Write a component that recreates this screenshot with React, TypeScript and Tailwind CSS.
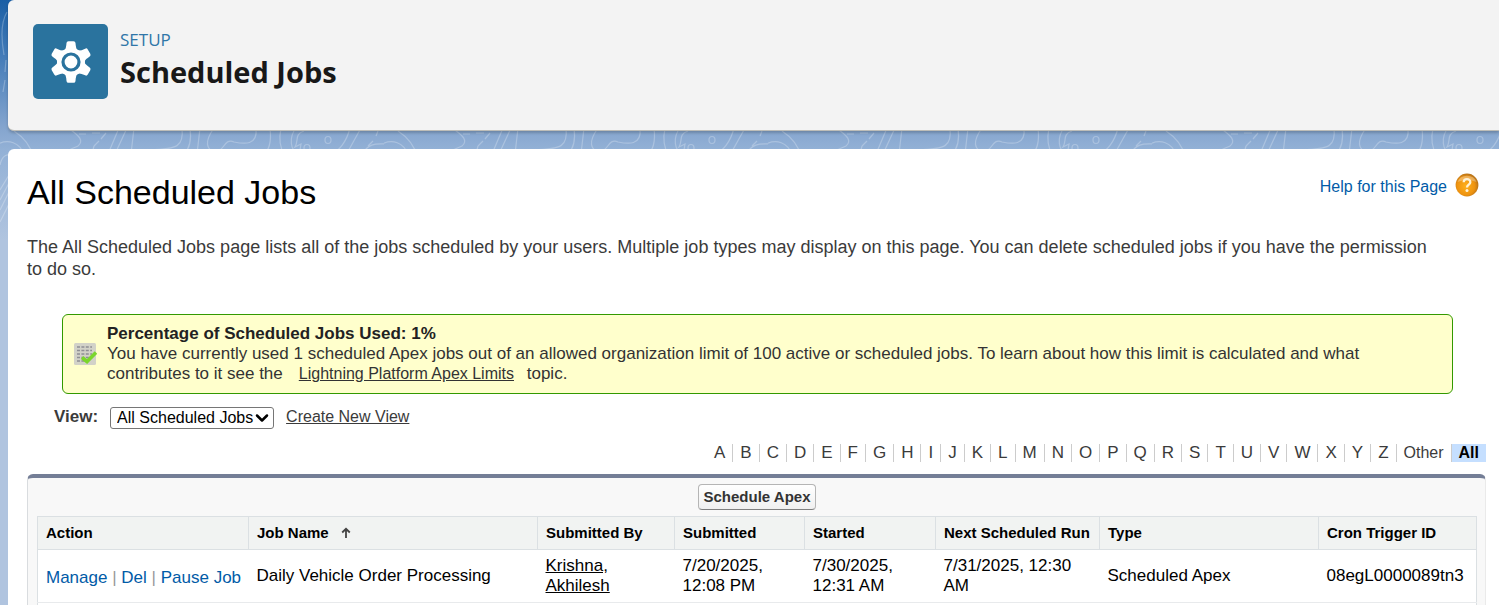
import type { ReactNode } from "react";
import { ChevronDown } from "lucide-react";

const letters = "ABCDEFGHIJKLMNOPQRSTUVWXYZ".split("");

function GearIcon() {
  return (
    <svg viewBox="-25 -25 50 50" className="size-[50px]" aria-hidden="true">
      <g fill="#fff" stroke="#fff" strokeWidth="4" strokeLinejoin="round">
        {[0, 60, 120, 180, 240, 300].map((a) => (
          <path key={a} transform={`rotate(${a})`} d="M-4.600 -11 Q-2.900 -13 -2.500 -18.800 H2.500 Q2.900 -13 4.600 -11 L4 -8 H-4 Z" />
        ))}
      </g>
      <circle r="14" fill="#fff" />
      <circle r="8" fill="#fff" stroke="#2a739e" strokeWidth="3.200" />
    </svg>
  );
}

function ContourPattern() {
  return (
    <svg className="absolute inset-0 h-full w-full" aria-hidden="true">
      <defs>
        <pattern id="contours" width="384" height="240" patternUnits="userSpaceOnUse">
          <g fill="none" stroke="#fff" strokeOpacity="0.25" strokeWidth="1.200">
            <path d="M14 131 C25 138 31 147 34 158 M-2 144 C8 139 20 142 24 155 M0 165 C2 155 9 152 12 158" />
            <path d="M68 128 C80 136 84 141 78 146 C72 149 66 150 62 155 M79 134 h7 M92 133 h8 M106 133 l-5 6 M99 141 l-5 5 M94 146 l-1 4" />
            <path d="M119 128 L108 154 M127 128 L115 154 M134 128 L131 154" />
            <path d="M182 128 C184 146 178 149 150 150 M190 128 C192 142 188 150 184 154 M200 128 L197 154" />
            <path d="M214 128 C204 142 206 149 216 154 M256 128 C258 146 244 144 234 142 C226 138 224 148 220 150 M270 128 C272 144 268 152 262 156" />
            <path d="M281 128 C278 142 281 150 285 156 M296 128 C288 138 291 150 298 156 M304 131 C294 134 299 141 295 147 L301 144 L300 150" />
            <ellipse cx="328" cy="140" rx="3" ry="3.500" />
            <ellipse cx="307" cy="148" rx="3" ry="3.500" />
            <path d="M350 128 C346 144 338 150 332 155 M361 128 L346 155 M378 131 l-2 5 M373 141 l-5 5 M362 155 C368 142 378 144 386 144" />
            <path d="M7 12 C1 22 1 38 4 55 M6 60 l-1 12 M5 80 l-2 12 M0 190 L9 175 M0 200 L9 183 M0 210 L9 192 M0 222 L9 204" />
          </g>
        </pattern>
      </defs>
      <rect width="100%" height="240" fill="url(#contours)" />
    </svg>
  );
}

function UsageIcon() {
  return (
    <svg viewBox="0 0 24 24" className="size-6 shrink-0" aria-hidden="true">
      <rect x="1" y="1" width="22" height="22" rx="1.5" fill="#d2d2c8" />
      <g stroke="#8f8f94" strokeWidth="1.6" strokeDasharray="3 1.4">
        <path d="M4 5h15M4 8.5h15M4 12h15M4 15.5h15M4 19h11" />
      </g>
      <path d="M9 15.500l5 4L23 10.500" fill="none" stroke="#7bd62c" strokeWidth="3.6" />
    </svg>
  );
}

function HelpIcon() {
  return (
    <svg viewBox="0 0 24 24" className="size-6" aria-hidden="true">
      <defs>
        <radialGradient id="help" cx="0.45" cy="0.55" r="0.6">
          <stop offset="0" stopColor="#ffb01c" />
          <stop offset="0.65" stopColor="#ee9310" />
          <stop offset="1" stopColor="#a8691a" />
        </radialGradient>
      </defs>
      <circle cx="12" cy="12" r="11.4" fill="url(#help)" />
      <path d="M2.5 9 A10 9 0 0 1 21.500 9 Q12 5 2.500 9Z" fill="#fff" opacity="0.3" />
      <path d="M8.700 9.300 C8.700 5.200 15.300 5.200 15.300 9.200 C15.300 11.500 12 11.800 12 14.500" fill="none" stroke="#fff3d8" strokeWidth="2.300" />
      <circle cx="12" cy="17.500" r="1.500" fill="#fff3d8" />
    </svg>
  );
}

function Th({ children }: { children: ReactNode }) {
  return (
    <th scope="col" className="h-[33px] border border-[#dbe0e3] bg-[#f1f3f2] px-2 text-left text-[15px] leading-5 font-bold whitespace-nowrap">
      {children}
    </th>
  );
}

function Td({ children }: { children: ReactNode }) {
  return <td className="border-b border-[#e8eaec] px-2 py-1.5 leading-5">{children}</td>;
}

export default function App() {
  return (
    <div className="relative min-h-screen overflow-hidden bg-[#b0c4df] bg-[linear-gradient(180deg,#1b5fa5_0px,#3f78b6_50px,#86a6cf_130px,#93b1d6_150px,#b0c4df_240px)] pl-2 font-['Liberation_Sans',Arial,sans-serif]">
      <ContourPattern />
      <div className="relative">
        <header className="mb-[18px] flex h-[131px] items-start gap-3 rounded-l-md border-b border-[#bdbdb8] bg-[#f3f3f3] px-[25px] pt-6 shadow-[0_2px_3px_rgba(0,0,0,0.2)]">
          <div className="flex size-[75px] items-center justify-center rounded-[5px] bg-[#2a739e]">
            <GearIcon />
          </div>
          <div className="pt-1 font-['Open_Sans',sans-serif]">
            <p className="text-[17px] leading-6 text-[#2f76a8]">SETUP</p>
            <h1 className="text-[29px] leading-10 font-bold text-[#181818]">Scheduled Jobs</h1>
          </div>
        </header>

        <main className="min-h-[456px] rounded-tl-md bg-white pr-[13px] pl-[19px] text-[17px] text-[#3b3b3b]">
          <div className="flex items-start justify-between pt-5">
            <h2 className="text-[34px] leading-[46px] text-black">All Scheduled Jobs</h2>
            <a href="#help" className="mt-1 mr-[7px] flex items-start gap-2 text-[16px] leading-5 text-[#015ba7]">
              <span className="pt-1">Help for this Page</span>
              <HelpIcon />
            </a>
          </div>
          <p className="mt-[21px] pr-12 text-[18px] leading-[22px]">
            The All Scheduled Jobs page lists all of the jobs scheduled by your users. Multiple job types may display on this page. You can delete scheduled jobs if you have the permission to do so.
          </p>

          <section className="mt-[34px] mr-[33px] ml-[35px] flex items-center gap-2.5 rounded-md border border-[#390] bg-[#ffc] py-[9px] pr-[60px] pl-2.5 leading-5 text-[#333]">
            <UsageIcon />
            <div>
              <h3 className="font-bold text-[#222]">Percentage of Scheduled Jobs Used: 1%</h3>
              <p>
                You have currently used 1 scheduled Apex jobs out of an allowed organization limit of 100 active or scheduled jobs. To learn about how this limit is calculated and what contributes to it see the
                <a href="#limits" className="mr-2 ml-4 text-[16px] underline">Lightning Platform Apex Limits</a> topic.
              </p>
            </div>
          </section>

          <div className="mt-[13px] ml-[27px] flex items-start leading-5">
            <label htmlFor="view" className="mr-3 font-bold">View:</label>
            <div className="relative flex items-center">
              <select id="view" className="h-[22px] w-[164px] appearance-none rounded-[3px] border border-[#767676] bg-white pl-1.5 text-[16px] leading-5 text-black">
                <option>All Scheduled Jobs</option>
              </select>
              <ChevronDown className="pointer-events-none absolute right-0.5 size-5 text-black" strokeWidth={3} />
            </div>
            <a href="#new" className="ml-3 text-[16px] underline">Create New View</a>
          </div>

          <nav aria-label="Filter by letter" className="mt-[15px] flex justify-end text-[16px] leading-[18px]">
            {letters.map((l) => (
              <a key={l} href={`#${l}`} className="border-r border-[#ccc] px-[7px] text-[17px]">{l}</a>
            ))}
            <a href="#other" className="border-r border-[#ccc] px-[7px]">Other</a>
            <a href="#all" className="bg-[#c5dfff] px-[7px] font-bold text-black">All</a>
          </nav>

          <section className="mt-3 rounded-t-md border-t-4 border-r border-l border-t-[#747e96] border-r-[#eaeaea] border-l-[#d9dcdf] bg-[#f8f8f8] pt-1.5 pr-2 pl-[9px]">
            <div className="flex justify-center">
              <button type="button" className="h-[26px] rounded border border-[#b5b5b5] border-b-[#7f7f7f] bg-linear-to-b from-white to-[#f0f0f0] px-[5px] text-[15px] leading-5 font-bold text-[#333]">
                Schedule Apex
              </button>
            </div>
            <table className="mt-1.5 w-full table-fixed border-collapse border-x border-[#dbe0e3] bg-white text-black">
              <colgroup>
                <col className="w-[211px]" />
                <col className="w-[289px]" />
                <col className="w-[137px]" />
                <col className="w-[130px]" />
                <col className="w-[131px]" />
                <col className="w-[164px]" />
                <col />
                <col className="w-[158px]" />
              </colgroup>
              <thead>
                <tr>
                  <Th>Action</Th>
                  <Th>
                    <span className="flex items-center gap-3">
                      Job Name
                      <svg viewBox="0 0 10 12" className="h-3 w-2.5" fill="none" stroke="#444" strokeWidth="1.800" aria-hidden="true">
                        <path d="M5 11V2M1.200 5.500L5 1.800L8.800 5.500" />
                      </svg>
                    </span>
                  </Th>
                  <Th>Submitted By</Th>
                  <Th>Submitted</Th>
                  <Th>Started</Th>
                  <Th>Next Scheduled Run</Th>
                  <Th>Type</Th>
                  <Th>Cron Trigger ID</Th>
                </tr>
              </thead>
              <tbody>
                <tr>
                  <td className="border-b border-[#e8eaec] px-2 pt-2.5 pb-1.5 leading-5 whitespace-nowrap text-[#999]">
                    <a href="#manage" className="text-[#015ba7]">Manage</a> | <a href="#del" className="text-[#015ba7]">Del</a> | <a href="#pause" className="text-[#015ba7]">Pause Job</a>
                  </td>
                  <Td>Daily Vehicle Order Processing</Td>
                  <Td><a href="#user" className="underline">Krishna, Akhilesh</a></Td>
                  <Td>7/20/2025, 12:08 PM</Td>
                  <Td>7/30/2025, 12:31 AM</Td>
                  <Td>7/31/2025, 12:30 AM</Td>
                  <Td>Scheduled Apex</Td>
                  <Td>08egL0000089tn3</Td>
                </tr>
              </tbody>
            </table>
            <div className="h-5 border-x border-[#dbe0e3] bg-white" />
          </section>
        </main>
      </div>
    </div>
  );
}
